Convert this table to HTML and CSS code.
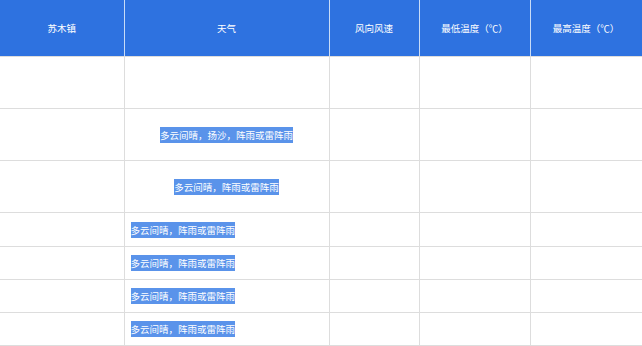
FILE: index.html
```html
<!DOCTYPE html>
<html lang="zh">
<head>
<meta charset="utf-8">
<link rel="stylesheet" href="styles.css">
</head>
<body>
<table class="grid">
  <colgroup>
    <col class="c1"><col class="c2"><col class="c3"><col class="c4"><col class="c5">
  </colgroup>
  <thead>
    <tr class="head">
      <th>苏木镇</th><th>天气</th><th>风向风速</th><th>最低温度（℃）</th><th>最高温度（℃）</th>
    </tr>
  </thead>
  <tbody>
    <tr class="tall"><td></td><td></td><td></td><td></td><td></td></tr>
    <tr class="tall"><td></td><td class="center"><span class="sel">多云间晴，扬沙，阵雨或雷阵雨</span></td><td></td><td></td><td></td></tr>
    <tr class="tall"><td></td><td class="center"><span class="sel">多云间晴，阵雨或雷阵雨</span></td><td></td><td></td><td></td></tr>
    <tr class="short first"><td></td><td><span class="sel">多云间晴，阵雨或雷阵雨</span></td><td></td><td></td><td></td></tr>
    <tr class="short"><td></td><td><span class="sel">多云间晴，阵雨或雷阵雨</span></td><td></td><td></td><td></td></tr>
    <tr class="short"><td></td><td><span class="sel">多云间晴，阵雨或雷阵雨</span></td><td></td><td></td><td></td></tr>
    <tr class="short"><td></td><td><span class="sel">多云间晴，阵雨或雷阵雨</span></td><td></td><td></td><td></td></tr>
  </tbody>
</table>
</body>
</html>
```
FILE: styles.css
```css
html, body {
  margin: 0;
  padding: 0;
  background: #ffffff;
}
body {
  font-family: "Noto Sans CJK SC", "Noto Sans", sans-serif;
  font-size: 9.5px;
}
.grid {
  border-collapse: collapse;
  table-layout: fixed;
  width: 642px;
}
.c1 { width: 124px; }
.c2 { width: 205px; }
.c3 { width: 90px; }
.c4 { width: 111px; }
.c5 { width: 112px; }
.grid th {
  background: #2e72e0;
  color: #ffffff;
  font-weight: normal;
  height: 56px;
  padding: 0;
  border-left: 1px solid #c9dcf7;
  border-right: 1px solid #c9dcf7;
  border-bottom: 1px solid #dddddd;
  text-align: center;
}
.grid th:first-child { border-left: none; }
.grid td {
  border: 1px solid #dddddd;
  padding: 0 0 0 6px;
  color: #ffffff;
  vertical-align: middle;
}
.grid td:first-child { border-left: none; }
.tall td { height: 51px; }
.short td { height: 32px; }
.short.first td { height: 33px; }
.grid td.center { text-align: center; padding: 0; }
.sel {
  background: #5a93ea;
  color: #ffffff;
  line-height: 13px;
  padding: 1px 0;
}
```
